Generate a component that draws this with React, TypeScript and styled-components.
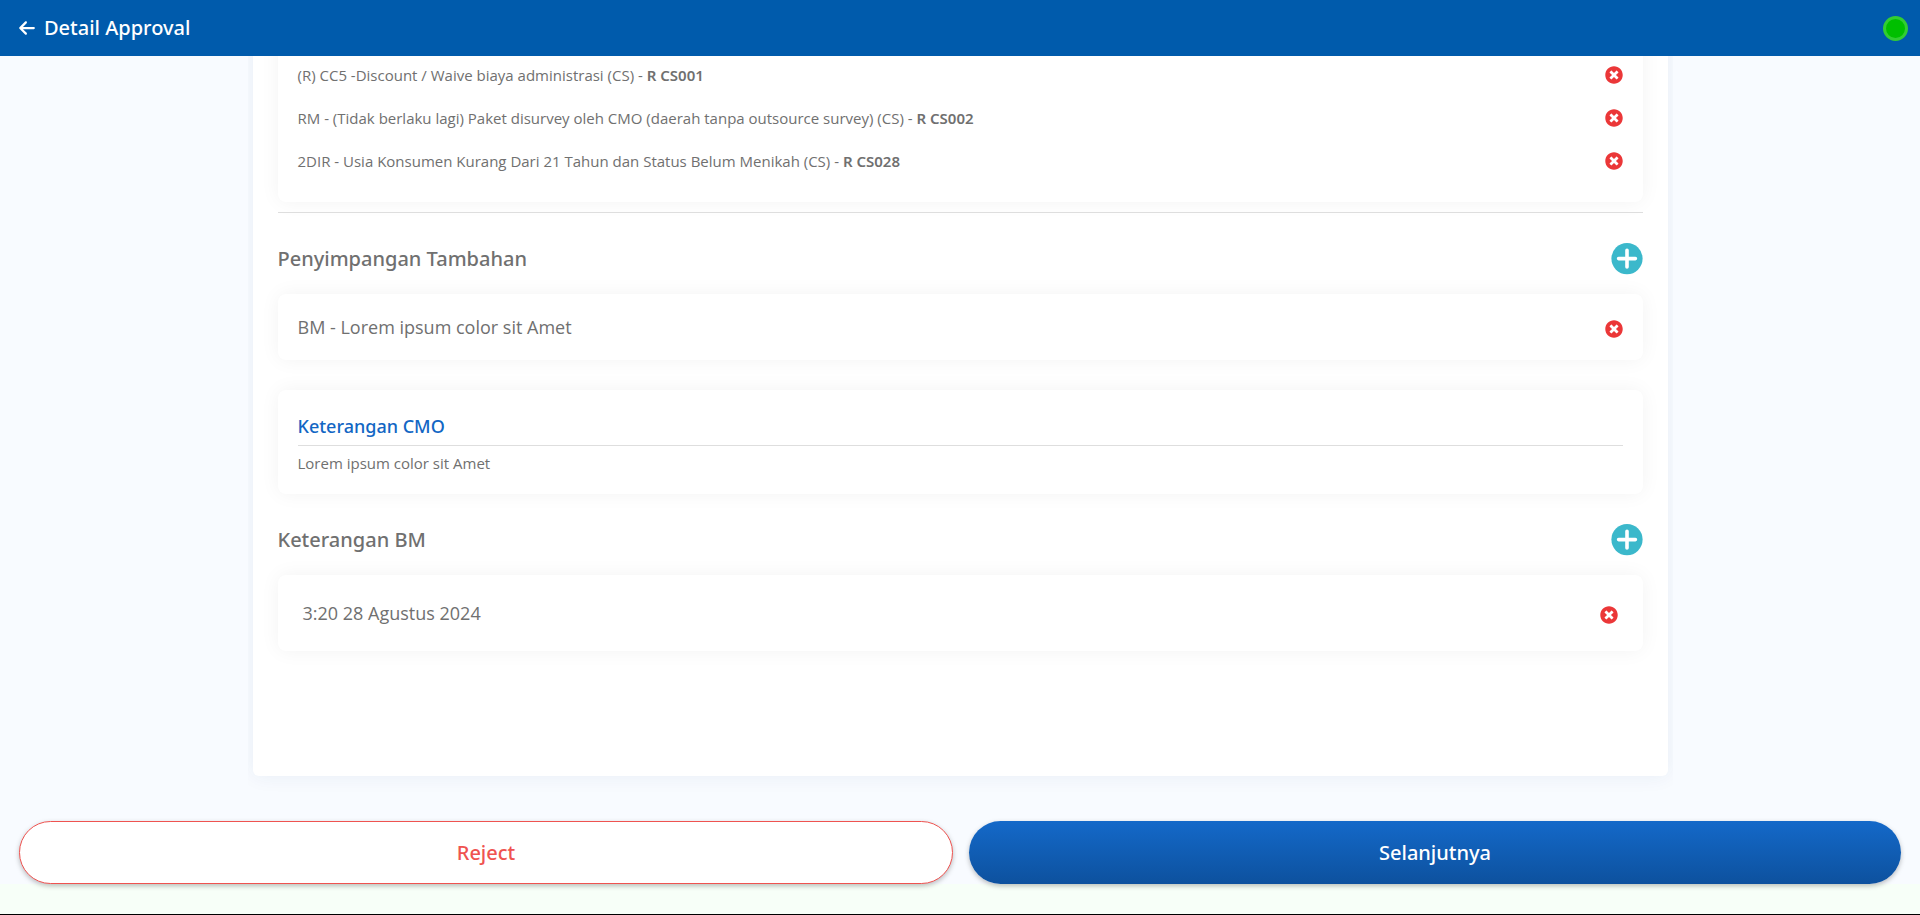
import React from "react";
import styled, { createGlobalStyle } from "styled-components";
import { FaArrowLeft } from "react-icons/fa6";
import { FaTimesCircle } from "react-icons/fa";

const headingFont = `"Noto Sans", "Open Sans", sans-serif`;

const GlobalStyle = createGlobalStyle`
  *, *::before, *::after { box-sizing: border-box; }
  body {
    margin: 0;
    background: #f8fbff;
    color: #707070;
    font-family: "Open Sans", "Noto Sans", sans-serif;
    font-size: 15px;
    line-height: 20px;
  }
  h1, h2, h3, p, ul { margin: 0; padding: 0; }
  h1, h2, h3 { font-family: ${headingFont}; font-weight: 500; }
  button { font: inherit; cursor: pointer; }
`;

const Page = styled.div`
  display: flex;
  flex-direction: column;
  min-height: 100vh;
`;

const Header = styled.header`
  position: relative;
  z-index: 1;
  display: flex;
  align-items: center;
  justify-content: space-between;
  height: 56px;
  padding: 0 12px 0 18px;
  background: #005bac;
  color: #fff;
`;

const HeaderTitle = styled.div`
  display: flex;
  align-items: center;
  gap: 8px;

  h1 {
    font-size: 20px;
    line-height: 28px;
  }
`;

const IconButton = styled.button`
  display: flex;
  padding: 0;
  border: 0;
  background: none;
  color: inherit;
`;

const DeleteIconButton = styled(IconButton)`
  color: #eb3738;
`;

const StatusDot = styled.span`
  width: 25px;
  height: 25px;
  border: 3px solid #32cd32;
  border-radius: 50%;
  background: #00bf00;
`;

const Main = styled.main`
  flex: 1;
  display: flex;
  flex-direction: column;
  align-items: center;
  padding: 0 10px;
`;

const ScrollArea = styled.div`
  flex: 1;
  display: flex;
  flex-direction: column;
  width: 75%;
  padding: 0 5px 18px;
  overflow: hidden;
`;

const Panel = styled.div`
  flex: 1;
  margin-top: -40px;
  padding: 0 25px 125px;
  border-radius: 6px;
  background: #fff;
  box-shadow: 0 0 20px rgba(10, 50, 120, 0.07);
`;

const Card = styled.div`
  padding: 20px;
  border-radius: 8px;
  background: #fff;
  box-shadow: 0 0 20px rgba(0, 0, 0, 0.05);
`;

const DeviationCard = styled(Card)`
  padding-top: 37px;
`;

const DeviationList = styled.ul`
  list-style: none;
`;

const DeviationItem = styled.li`
  display: flex;
  align-items: center;
  justify-content: space-between;
  height: 43px;

  b {
    font-family: ${headingFont};
    font-weight: 600;
  }
`;

const Divider = styled.hr`
  height: 1px;
  margin: 0;
  border: 0;
  background: #dedede;
`;

const SectionDivider = styled(Divider)`
  margin-top: 10px;
`;

const SectionHeader = styled.div`
  display: flex;
  align-items: center;
  justify-content: space-between;
  margin: 30px 0 19px;

  h2 {
    font-size: 20px;
    line-height: 28px;
  }
`;

const EntryCard = styled(Card)<{ $roomy?: boolean }>`
  display: flex;
  align-items: center;
  justify-content: space-between;
  padding: ${(p) => (p.$roomy ? "25px" : "20px")};
  font-size: 18px;
  line-height: 26px;

  ${DeleteIconButton} {
    padding-top: 4px;
  }
`;

const NoteCard = styled(Card)`
  margin-top: 30px;

  h3 {
    padding: 3px 0 6px;
    color: #1266c4;
    font-size: 18px;
    line-height: 26px;
  }

  p {
    padding: 7px 0 1px;
  }
`;

const ActionBar = styled.div`
  display: flex;
  gap: 16px;
  padding: 27px 19px 0;
`;

const ActionButton = styled.button<{ $primary?: boolean }>`
  flex: 1;
  height: 63px;
  padding: 0;
  border: ${(p) => (p.$primary ? "0" : "1px solid #ef5350")};
  border-radius: 32px;
  background: ${(p) => (p.$primary ? "linear-gradient(#1469c9, #0d519e)" : "#fff")};
  color: ${(p) => (p.$primary ? "#fff" : "#ef5350")};
  box-shadow: 0 2px 5px rgba(0, 0, 0, 0.26);
  font-family: ${headingFont};
  font-size: 20px;
  font-weight: 500;
`;

const Footer = styled.footer`
  position: relative;
  z-index: -1;
  height: 31px;
  border-bottom: 1px solid #000;
  background: #f7fff8;
`;

const deviations = [
  { text: "(R) CC5 -Discount / Waive biaya administrasi (CS) - ", code: "R CS001" },
  {
    text: "RM - (Tidak berlaku lagi) Paket disurvey oleh CMO (daerah tanpa outsource survey) (CS) - ",
    code: "R CS002",
  },
  { text: "2DIR - Usia Konsumen Kurang Dari 21 Tahun dan Status Belum Menikah (CS) - ", code: "R CS028" },
];

function DeleteButton() {
  return (
    <DeleteIconButton type="button" aria-label="Hapus">
      <FaTimesCircle size={18} />
    </DeleteIconButton>
  );
}

function AddButton() {
  return (
    <IconButton type="button" aria-label="Tambah">
      <svg width="32" height="32" viewBox="0 0 32 32">
        <circle cx="16" cy="15.6" r="15.6" fill="#3bb8cb" />
        <path d="M16 7.2v16.8M7.6 15.6h16.8" stroke="#fff" strokeWidth="3.6" strokeLinecap="round" />
      </svg>
    </IconButton>
  );
}

export default function App() {
  return (
    <>
      <GlobalStyle />
      <Page>
        <Header>
          <HeaderTitle>
            <IconButton type="button" aria-label="Kembali">
              <FaArrowLeft size={18} />
            </IconButton>
            <h1>Detail Approval</h1>
          </HeaderTitle>
          <StatusDot />
        </Header>
        <Main>
          <ScrollArea>
            <Panel>
              <DeviationCard>
                <DeviationList>
                  {deviations.map((d) => (
                    <DeviationItem key={d.code}>
                      <span>
                        {d.text}
                        <b>{d.code}</b>
                      </span>
                      <DeleteButton />
                    </DeviationItem>
                  ))}
                </DeviationList>
              </DeviationCard>
              <SectionDivider />
              <SectionHeader>
                <h2>Penyimpangan Tambahan</h2>
                <AddButton />
              </SectionHeader>
              <EntryCard>
                <span>BM - Lorem ipsum color sit Amet</span>
                <DeleteButton />
              </EntryCard>
              <NoteCard>
                <h3>Keterangan CMO</h3>
                <Divider />
                <p>Lorem ipsum color sit Amet</p>
              </NoteCard>
              <SectionHeader>
                <h2>Keterangan BM</h2>
                <AddButton />
              </SectionHeader>
              <EntryCard $roomy>
                <span>3:20 28 Agustus 2024</span>
                <DeleteButton />
              </EntryCard>
            </Panel>
          </ScrollArea>
        </Main>
        <ActionBar>
          <ActionButton type="button">Reject</ActionButton>
          <ActionButton type="button" $primary>
            Selanjutnya
          </ActionButton>
        </ActionBar>
        <Footer />
      </Page>
    </>
  );
}
